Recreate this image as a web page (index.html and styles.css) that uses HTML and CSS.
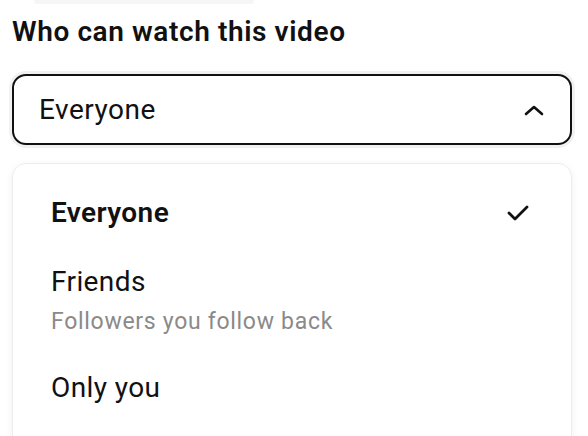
FILE: index.html
```html
<!DOCTYPE html>
<html>
<head>
<meta charset="utf-8">
<link rel="stylesheet" href="styles.css">
</head>
<body>
<div class="page">
  <div class="topbar"></div>
  <h1 class="title">Who can watch this video</h1>
  <div class="select">
    <span class="select-value">Everyone</span>
    <svg class="chevron" width="20" height="12" viewBox="0 0 20 12"><path d="M2 10 L10 3 L18 10" fill="none" stroke="#111" stroke-width="2.6" stroke-linecap="round" stroke-linejoin="round"/></svg>
  </div>
  <div class="menu">
    <div class="option selected">
      <span class="label">Everyone</span>
      <svg class="check" width="22" height="18" viewBox="0 0 22 18"><path d="M2 9 L8 15 L20 3" fill="none" stroke="#111" stroke-width="2.8" stroke-linecap="round" stroke-linejoin="round"/></svg>
    </div>
    <div class="option friends">
      <div class="option-text">
        <span class="label">Friends</span>
        <span class="sub">Followers you follow back</span>
      </div>
    </div>
    <div class="option only">
      <span class="label">Only you</span>
    </div>
  </div>
</div>
</body>
</html>
```

FILE: styles.css
```css
html, body {
  margin: 0;
  padding: 0;
  background: #ffffff;
}
body {
  font-family: Roboto, "Liberation Sans", sans-serif;
  color: #111111;
}
.page {
  width: 588px;
  height: 436px;
  overflow: hidden;
  box-sizing: border-box;
  padding: 0 16px 0 12px;
  display: flex;
  flex-direction: column;
}
.topbar {
  flex: none;
  margin-left: 22px;
  width: 220px;
  height: 4px;
  background: #f6f6f6;
  border-radius: 0 0 3px 3px;
}
.title {
  flex: none;
  margin: 12px 0 0 0;
  font-size: 28px;
  font-weight: 600;
  line-height: 32px;
  letter-spacing: 0.6px;
}
.select {
  flex: none;
  margin-top: 26px;
  height: 71px;
  box-sizing: border-box;
  border: 2px solid #111;
  border-radius: 14px;
  box-shadow: 0 0 0 3px #f1f1f1;
  display: flex;
  align-items: center;
  justify-content: space-between;
  padding: 0 26px 0 25px;
}
.select-value {
  font-size: 28px;
  font-weight: 400;
  letter-spacing: 0.5px;
}
.chevron {
  display: block;
}
.menu {
  flex: none;
  margin-top: 18px;
  border: 1px solid #ececec;
  border-radius: 14px;
  box-shadow: 0 2px 8px rgba(0,0,0,0.06);
  padding: 22px 42px 20px 38px;
  display: flex;
  flex-direction: column;
  height: 300px;
  box-sizing: border-box;
}
.option {
  display: flex;
  align-items: center;
  justify-content: space-between;
}
.option.selected {
  height: 54px;
}
.option.friends {
  margin-top: 26px;
}
.option.only {
  margin-top: 37px;
}
.option-text {
  display: flex;
  flex-direction: column;
}
.label {
  font-size: 28px;
  line-height: 32px;
  font-weight: 400;
  letter-spacing: 0.4px;
}
.selected .label {
  font-weight: 600;
}
.sub {
  margin-top: 11px;
  font-size: 23px;
  line-height: 26px;
  letter-spacing: 0.7px;
  color: #8a8a8a;
}
.check {
  display: block;
}
```
